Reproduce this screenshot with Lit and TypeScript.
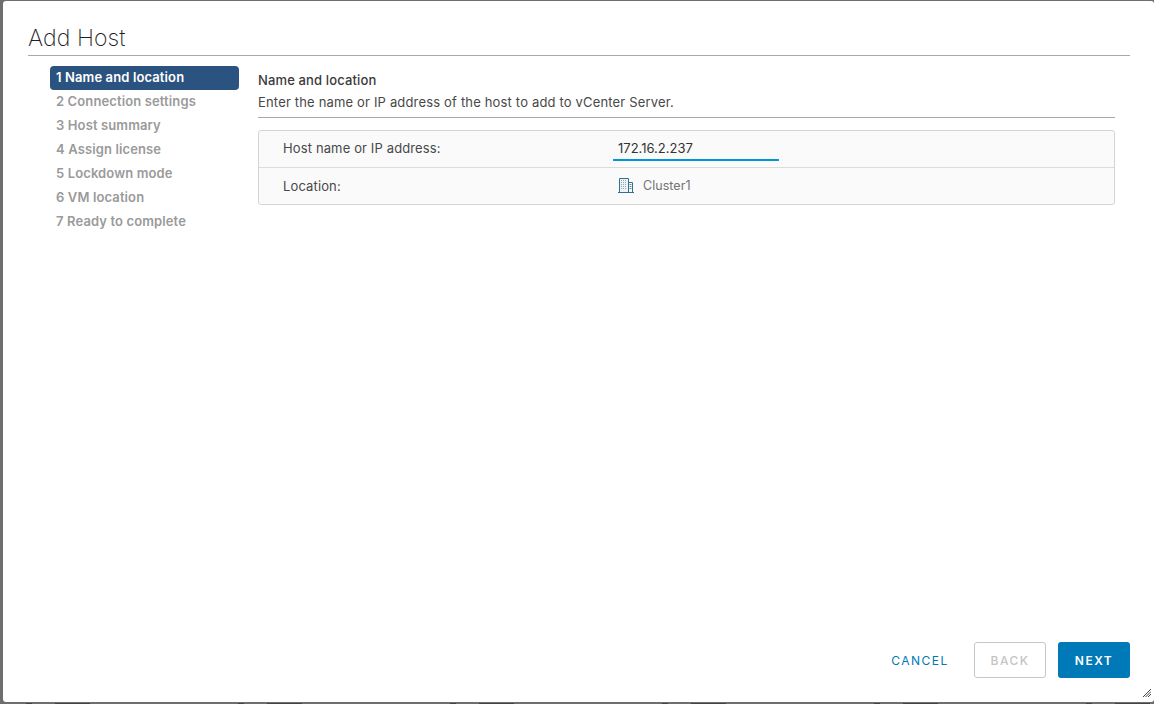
import { LitElement, html, css } from 'lit';
import { customElement } from 'lit/decorators.js';

const STEPS = [
  '1 Name and location',
  '2 Connection settings',
  '3 Host summary',
  '4 Assign license',
  '5 Lockdown mode',
  '6 VM location',
  '7 Ready to complete',
];

@customElement('app-root')
export class AppRoot extends LitElement {
  static styles = css`
    :host {
      display: block;
      width: 1154px;
      height: 704px;
      overflow: hidden;
      background: #6e6e6e;
      font-family: 'Inter', 'Liberation Sans', sans-serif;
    }

    .modal {
      box-sizing: border-box;
      position: relative;
      display: flex;
      flex-direction: column;
      width: 1151px;
      height: 701px;
      margin: 1px 0 0 3px;
      padding: 0 24px 24px 25px;
      background: #fff;
      border-radius: 3px;
    }

    /* tops of the table text behind the dialog, one column group every 212px */
    .behind {
      height: 1px;
      margin-top: 1px;
      background: repeating-linear-gradient(
        90deg,
        #444 0 6px,
        transparent 6px 29px,
        #444 29px 64px,
        transparent 64px 212px
      );
      background-position-x: 26px;
    }

    .title {
      box-sizing: border-box;
      height: 55px;
      padding-top: 22px;
      font-size: 23px;
      line-height: 31px;
      letter-spacing: 0.1px;
      font-weight: 200;
      color: #1f1f1f;
      border-bottom: 1px solid #a8a8a8;
    }

    .body {
      flex: 1;
      display: flex;
      padding: 10px 15px 0 22px;
    }

    .steps {
      width: 189px;
      margin-right: 19px;
      flex: none;
    }

    .step {
      box-sizing: border-box;
      height: 24px;
      padding-left: 6px;
      font-size: 13px;
      line-height: 23px;
      letter-spacing: 0.12px;
      font-weight: 600;
      color: #9a9a9a;
      border-radius: 4px;
    }

    .step.active {
      background: #2b5380;
      color: #fff;
    }

    .content {
      flex: 1;
    }

    .heading {
      margin-top: 5px;
      font-size: 13px;
      line-height: 18px;
      letter-spacing: 0.14px;
      font-weight: 500;
      color: #3a3a3a;
    }

    .desc {
      margin-top: 4px;
      padding-bottom: 6px;
      font-size: 13px;
      line-height: 18px;
      letter-spacing: 0.17px;
      color: #484848;
      border-bottom: 1px solid #a8a8a8;
    }

    .table {
      margin-top: 12px;
      background: #fafafa;
      border: 1px solid #d4d4d4;
      border-radius: 3px;
    }

    .row {
      box-sizing: border-box;
      display: flex;
      align-items: center;
      height: 36px;
      padding: 0 0 2px 24px;
      font-size: 13px;
      letter-spacing: 0.13px;
      color: #484848;
    }

    .row + .row {
      height: 37px;
      padding-bottom: 1px;
      border-top: 1px solid #dcdcdc;
    }

    .label {
      width: 330px;
      flex: none;
    }

    .input {
      box-sizing: border-box;
      align-self: flex-start;
      width: 166px;
      height: 30px;
      padding: 9px 0 0 5px;
      line-height: 17px;
      letter-spacing: 0;
      color: #333;
      border-bottom: 2px solid #0095d3;
    }

    .value {
      display: flex;
      align-items: center;
      gap: 9px;
      padding-left: 5px;
      font-size: 12.5px;
      letter-spacing: 0.05px;
      color: #747474;
    }

    .value svg {
      display: block;
    }

    .footer {
      display: flex;
      justify-content: flex-end;
      align-items: center;
    }

    .btn {
      box-sizing: border-box;
      display: flex;
      align-items: center;
      justify-content: center;
      width: 72px;
      height: 36px;
      font-size: 12px;
      font-weight: 600;
      letter-spacing: 1.5px;
      border-radius: 3px;
      margin-left: 12px;
    }

    .cancel {
      color: #0079b8;
      font-weight: 400;
      width: 84px;
      margin-left: 0;
    }

    .back {
      color: #c4c4c4;
      font-weight: 500;
      border: 1px solid #c8c8c8;
    }

    .next {
      color: #fff;
      background: #0079b8;
    }

    .grip {
      position: absolute;
      right: 3px;
      bottom: 5px;
      display: block;
    }
  `;

  render() {
    return html`
      <div class="modal">
        <div class="title">Add Host</div>
        <div class="body">
          <div class="steps">
            ${STEPS.map(
              (s, i) => html`<div class="step ${i === 0 ? 'active' : ''}">${s}</div>`
            )}
          </div>
          <div class="content">
            <div class="heading">Name and location</div>
            <div class="desc">Enter the name or IP address of the host to add to vCenter Server.</div>
            <div class="table">
              <div class="row">
                <div class="label">Host name or IP address:</div>
                <div class="input">172.16.2.237</div>
              </div>
              <div class="row">
                <div class="label">Location:</div>
                <div class="value">
                  <svg width="16" height="15" viewBox="0 0 16 15" fill="none">
                    <path d="M1.5 14V.5h9V14" stroke="#35708f" fill="#eef3f6" />
                    <path d="M10.5 4.5h4V14" stroke="#35708f" />
                    <path d="M0 14.5h16" stroke="#35708f" />
                    <path d="M3 2.5h6M3 4.5h6M3 6.5h6M3 8.5h6M3 10.5h6" stroke="#8fa9b9" stroke-dasharray="1 1" />
                    <path d="M11.5 6.5h2M11.5 8.5h2M11.5 10.5h2" stroke="#5f8aa3" />
                  </svg>
                  Cluster1
                </div>
              </div>
            </div>
          </div>
        </div>
        <div class="footer">
          <div class="btn cancel">CANCEL</div>
          <div class="btn back">BACK</div>
          <div class="btn next">NEXT</div>
        </div>
        <svg class="grip" width="8" height="8" viewBox="0 0 8 8" fill="none" stroke="#444">
          <path d="M0 8L8 0M2.5 8L8 2.5M5 8L8 5" />
        </svg>
      </div>
      <div class="behind"></div>
    `;
  }
}
